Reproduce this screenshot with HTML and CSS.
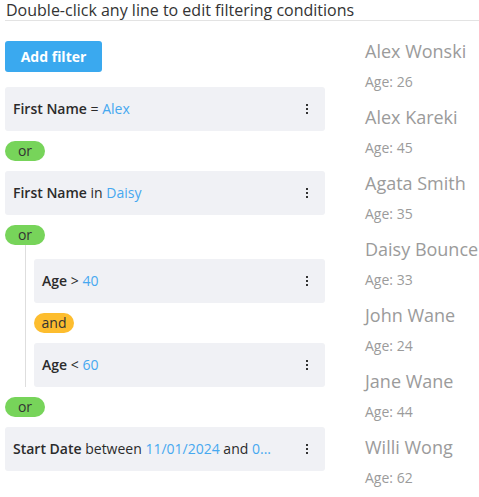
FILE: index.html
```html
<!DOCTYPE html>
<html>
<head>
<meta charset="utf-8">
<link rel="stylesheet" href="styles.css">
</head>
<body>
<div class="page">
  <div class="header">Double-click any line to edit filtering conditions</div>
  <div class="main">
    <div class="filters">
      <button class="add-btn">Add filter</button>
      <div class="list">
        <div class="card"><span class="txt"><b>First Name</b> = <span class="val">Alex</span></span><svg class="dots" width="4" height="10" viewBox="0 0 4 10"><rect x="1" y="0" width="2" height="2"/><rect x="1" y="4" width="2" height="2"/><rect x="1" y="8" width="2" height="2"/></svg></div>
        <span class="pill or">or</span>
        <div class="card"><span class="txt"><b>First Name</b> in <span class="val">Daisy</span></span><svg class="dots" width="4" height="10" viewBox="0 0 4 10"><rect x="1" y="0" width="2" height="2"/><rect x="1" y="4" width="2" height="2"/><rect x="1" y="8" width="2" height="2"/></svg></div>
        <span class="pill or">or</span>
        <div class="group">
          <div class="card"><span class="txt"><b>Age</b> &gt; <span class="val">40</span></span><svg class="dots" width="4" height="10" viewBox="0 0 4 10"><rect x="1" y="0" width="2" height="2"/><rect x="1" y="4" width="2" height="2"/><rect x="1" y="8" width="2" height="2"/></svg></div>
          <span class="pill and">and</span>
          <div class="card"><span class="txt"><b>Age</b> &lt; <span class="val">60</span></span><svg class="dots" width="4" height="10" viewBox="0 0 4 10"><rect x="1" y="0" width="2" height="2"/><rect x="1" y="4" width="2" height="2"/><rect x="1" y="8" width="2" height="2"/></svg></div>
        </div>
        <span class="pill or">or</span>
        <div class="card"><span class="txt"><b>Start Date</b> between <span class="val">11/01/2024</span> and <span class="val">0...</span></span><svg class="dots" width="4" height="10" viewBox="0 0 4 10"><rect x="1" y="0" width="2" height="2"/><rect x="1" y="4" width="2" height="2"/><rect x="1" y="8" width="2" height="2"/></svg></div>
      </div>
    </div>
    <div class="people">
      <div class="person"><div class="name">Alex Wonski</div><div class="age">Age: 26</div></div>
      <div class="person"><div class="name">Alex Kareki</div><div class="age">Age: 45</div></div>
      <div class="person"><div class="name">Agata Smith</div><div class="age">Age: 35</div></div>
      <div class="person"><div class="name">Daisy Bounce</div><div class="age">Age: 33</div></div>
      <div class="person"><div class="name">John Wane</div><div class="age">Age: 24</div></div>
      <div class="person"><div class="name">Jane Wane</div><div class="age">Age: 44</div></div>
      <div class="person"><div class="name">Willi Wong</div><div class="age">Age: 62</div></div>
    </div>
  </div>
</div>
</body>
</html>
```

FILE: styles.css
```css
html, body {
  margin: 0;
  padding: 0;
  background: #fff;
  overflow: hidden;
}
body {
  font-family: "Open Sans", "Liberation Sans", sans-serif;
  color: #333;
}
.page {
  padding: 0 0 0 5px;
}
.header {
  font-size: 16px;
  line-height: 20px;
  height: 20px;
  padding-left: 1px;
  color: #333;
  border-bottom: 1px solid #e3e3e3;
  white-space: nowrap;
}
.main {
  display: flex;
  gap: 40px;
}
.filters {
  width: 320px;
  flex: none;
  padding-top: 20px;
}
.add-btn {
  display: block;
  width: 97px;
  height: 31px;
  border: none;
  border-radius: 3px;
  background: #3aa9ef;
  color: #fff;
  font-family: "Open Sans", "Liberation Sans", sans-serif;
  font-weight: 700;
  font-size: 14px;
  padding: 0 0 1px 0;
  cursor: pointer;
}
.list {
  display: flex;
  flex-direction: column;
  align-items: flex-start;
  gap: 10px;
  margin-top: 15px;
}
.card {
  box-sizing: border-box;
  align-self: stretch;
  height: 44px;
  background: #f0f1f5;
  border-radius: 3px;
  display: flex;
  align-items: center;
  justify-content: space-between;
  padding: 0 16px 0 8px;
  font-size: 14px;
  color: #2b2b2b;
  white-space: nowrap;
}
.txt {
  line-height: 20px;
  margin-bottom: 1px;
}
.card b {
  font-weight: 600;
}
.val {
  color: #46a8f0;
}
.dots {
  fill: #333;
  flex: none;
}
.pill {
  box-sizing: border-box;
  display: inline-flex;
  align-items: center;
  justify-content: center;
  height: 20px;
  width: 40px;
  padding-bottom: 2px;
  border-radius: 10px;
  font-size: 14px;
  color: #333;
}
.pill.or {
  background: #77d45a;
}
.pill.and {
  background: #fdbd2e;
}
.group {
  align-self: stretch;
  margin-top: -10px;
  margin-left: 20px;
  padding-top: 14px;
  padding-left: 8px;
  border-left: 1px solid #dedede;
  display: flex;
  flex-direction: column;
  align-items: flex-start;
  gap: 10px;
}
.people {
  padding-top: 14px;
}
.person {
  margin-bottom: 4px;
}
.name {
  font-size: 18px;
  line-height: 32px;
  color: #9b9b9b;
  white-space: nowrap;
}
.age {
  font-size: 14px;
  line-height: 30px;
  color: #9b9b9b;
}
```
